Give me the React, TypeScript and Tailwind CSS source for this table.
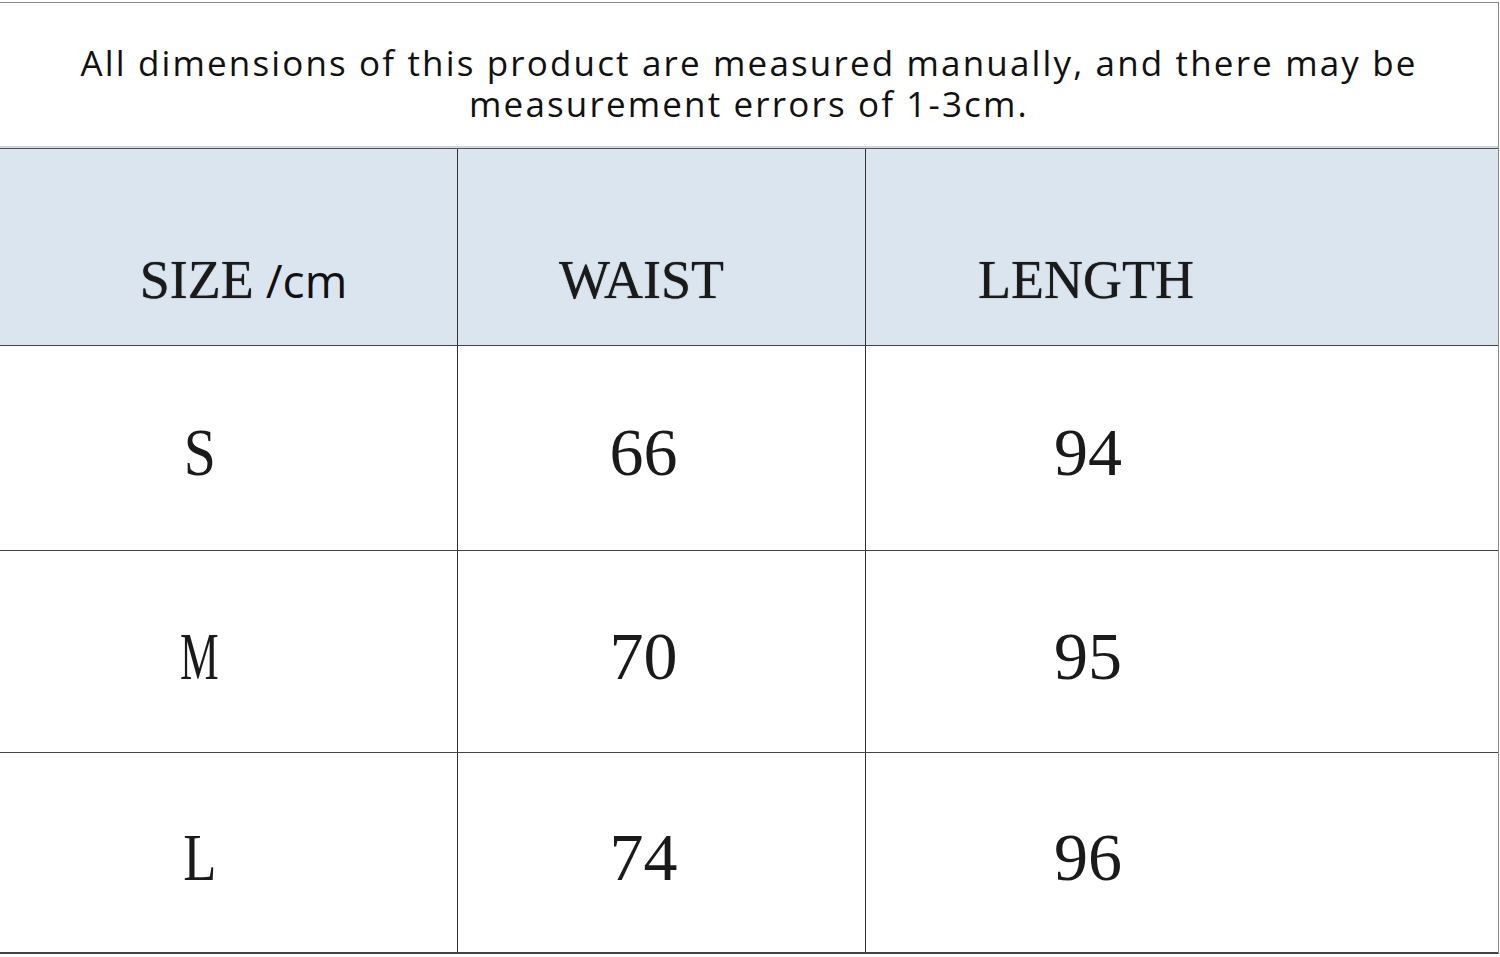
const rows = [
  { size: "S", waist: "66", length: "94", sx: "scale-x-[0.85]" },
  { size: "M", waist: "70", length: "95", sx: "scale-x-[0.64]" },
  { size: "L", waist: "74", length: "96", sx: "scale-x-[0.8]" },
];

const serif = "font-['Liberation_Serif','Times_New_Roman',serif]";

export default function App() {
  return (
    <div className="w-[1500px] h-[957px] bg-white overflow-hidden">
      <div className="w-[1499px] h-[952px] border-t border-r border-[#8a8a8a] flex flex-col mt-[2px]">
        {/* note */}
        <div className="h-[145px] flex items-center justify-center pt-[16px] font-['Open_Sans',sans-serif] text-[35px] leading-[41px] tracking-[2.15px] text-[#111] text-center border-b-2 border-[#d4d6d9]">
          <p>
            All dimensions of this product are measured manually, and there may be
            <br />
            measurement errors of 1-3cm.
          </p>
        </div>

        {/* table */}
        <div className="flex-1 flex flex-col">
          <div className="h-[198px] grid grid-cols-[458px_408px_1fr] bg-[#dbe5ef] border-t border-[#555] border-b border-b-[#444]">
            <div className="flex items-center justify-center pt-[66px] pl-[30px] border-r border-[#333]">
              <span className={`${serif} text-[54px] leading-none text-[#1a1a1a] [text-shadow:0_0_1px_#333]`}>SIZE</span>
              <span className="font-['Open_Sans',sans-serif] text-[46px] leading-none ml-[12px] text-[#111]">/cm</span>
            </div>
            <div className="flex items-center justify-center pt-[66px] pr-[40px] border-r border-[#333]">
              <span className={`${serif} text-[54px] leading-none text-[#1a1a1a] [text-shadow:0_0_1px_#333]`}>WAIST</span>
            </div>
            <div className="flex items-center justify-center pt-[66px] pr-[192px]">
              <span className={`${serif} text-[54px] leading-none text-[#1a1a1a] [text-shadow:0_0_1px_#333]`}>LENGTH</span>
            </div>
          </div>

          {rows.map((r, i) => (
            <div
              key={r.size}
              className={`grid grid-cols-[458px_408px_1fr] border-b border-[#444] ${i === 0 ? "h-[205px]" : "h-[202px]"} ${i === 2 ? "flex-1 border-b-2" : ""}`}
            >
              <div className="flex items-center justify-center pr-[58px] pt-[8px] border-r border-[#333]">
                <span className={`${serif} ${r.sx} inline-block text-[68px] leading-none text-[#1a1a1a]`}>{r.size}</span>
              </div>
              <div className="flex items-center justify-center pr-[36px] pt-[8px] border-r border-[#333]">
                <span className={`${serif} text-[68px] leading-none text-[#1a1a1a]`}>{r.waist}</span>
              </div>
              <div className="flex items-center justify-center pr-[188px] pt-[8px]">
                <span className={`${serif} text-[68px] leading-none text-[#1a1a1a]`}>{r.length}</span>
              </div>
            </div>
          ))}
        </div>
      </div>
    </div>
  );
}
